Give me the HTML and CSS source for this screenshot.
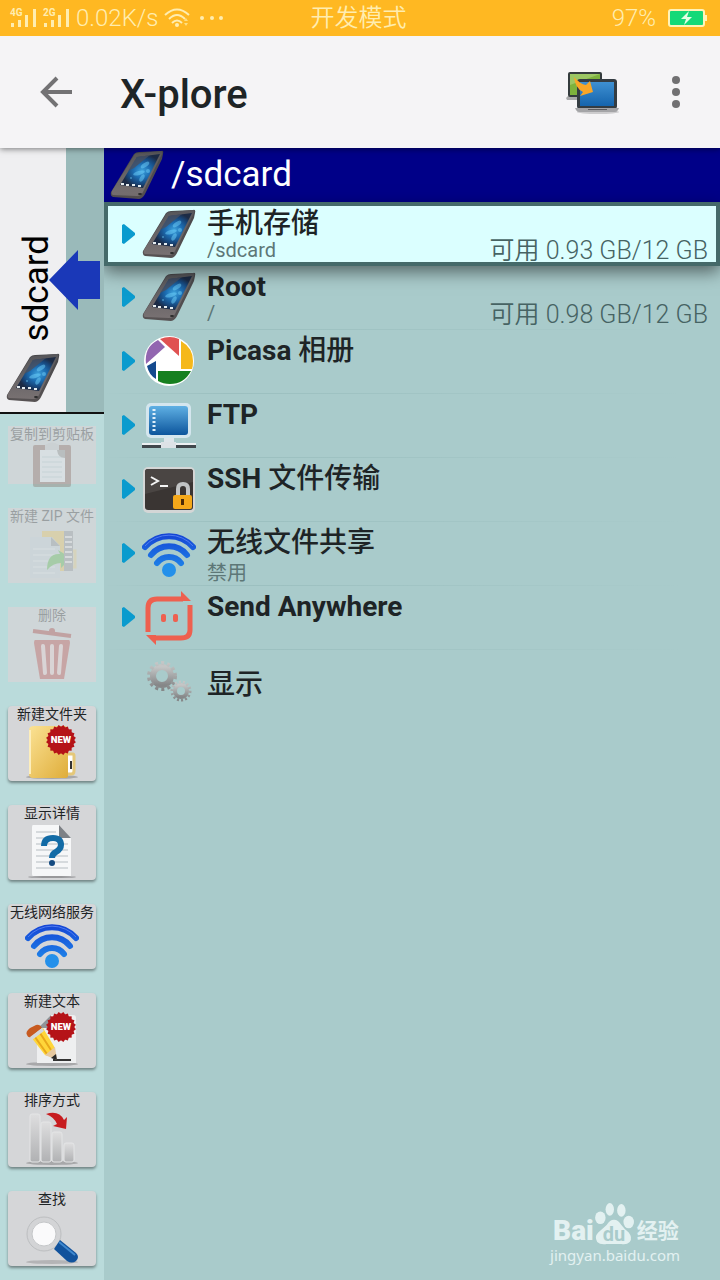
FILE: index.html
```html
<!DOCTYPE html>
<html lang="zh-CN">
<head>
    <meta charset="UTF-8">
    <meta name="viewport" content="width=device-width, initial-scale=1.0">
    <title>X-plore</title>
    <link rel="stylesheet" href="styles.css">
</head>
<body>
    <!-- Shared icons -->
    <svg class="defs" width="0" height="0" aria-hidden="true">
        <defs>
            <linearGradient id="phone-body" x1="0" y1="0" x2="0" y2="1">
                <stop offset="0" stop-color="#48484b"/>
                <stop offset="1" stop-color="#575253"/>
            </linearGradient>
            <linearGradient id="phone-front" x1="0" y1="0" x2="0" y2="1">
                <stop offset="0" stop-color="#56565a"/>
                <stop offset="1" stop-color="#787172"/>
            </linearGradient>
            <radialGradient id="phone-glow" cx="0.55" cy="0.5" r="0.5">
                <stop offset="0" stop-color="#3fa3dc"/>
                <stop offset="0.4" stop-color="#1d6fb4"/>
                <stop offset="0.75" stop-color="#17477c"/>
                <stop offset="1" stop-color="#1c2b45"/>
            </radialGradient>
            <linearGradient id="wifi-blue" gradientUnits="userSpaceOnUse" x1="0" y1="0" x2="0" y2="46">
                <stop offset="0" stop-color="#1440d4"/>
                <stop offset="1" stop-color="#2196ee"/>
            </linearGradient>
            <linearGradient id="gold" x1="0" y1="0" x2="1" y2="1">
                <stop offset="0" stop-color="#fbe294"/>
                <stop offset="1" stop-color="#dfad3a"/>
            </linearGradient>
            <linearGradient id="screen" x1="0" y1="0" x2="0" y2="1">
                <stop offset="0" stop-color="#5fb0e4"/>
                <stop offset="1" stop-color="#0c559c"/>
            </linearGradient>
            <linearGradient id="laptop" x1="0" y1="0" x2="0" y2="1">
                <stop offset="0" stop-color="#3e90d2"/>
                <stop offset="1" stop-color="#1564ad"/>
            </linearGradient>
            <linearGradient id="grey" x1="0" y1="0" x2="0" y2="1">
                <stop offset="0" stop-color="#c4c6c6"/>
                <stop offset="1" stop-color="#858788"/>
            </linearGradient>
            <linearGradient id="bar" x1="0" y1="0" x2="0" y2="1">
                <stop offset="0" stop-color="#dededf"/>
                <stop offset="1" stop-color="#b0b1b3"/>
            </linearGradient>
        </defs>
        <symbol id="icon-phone" viewBox="0 0 54 50">
            <path d="M24 4 Q26 2 29 2 L51 1 Q54 0 53 4 L52 9 L36 42 Q33 49 29 49 L3 47 Q0 46 1 42Z" fill="url(#phone-body)"/>
            <path d="M25 4 Q26 3 30 3 L51 1 Q53 1 52 4 L33 42 Q31 46 27 46 L3 45 Q1 44 2 41Z" fill="url(#phone-front)"/>
            <path d="M27 7 L50 4 L33 38 L10 35Z" fill="url(#phone-glow)"/>
            <path d="M27 7 L40 5 L24 18 L18 21Z" fill="#4a5060" opacity=".8"/>
            <g fill="#6fd0fa" opacity=".5">
                <ellipse cx="35" cy="15" rx="5" ry="2" transform="rotate(-35 35 15)"/>
                <ellipse cx="29" cy="23" rx="6" ry="2" transform="rotate(-15 29 23)"/>
                <ellipse cx="32" cy="28" rx="2" ry="4" transform="rotate(30 32 28)"/>
                <circle cx="38" cy="21" r="2"/>
                <circle cx="21" cy="28" r="1"/>
            </g>
            <path d="M11 34h3M16 35h3M22 35h3M28 36h3" stroke="#e4ecf0" stroke-width="2"/>
            <ellipse cx="30" cy="44" rx="2" ry="1" fill="#2a2a2a"/>
        </symbol>
        <symbol id="icon-wifi" viewBox="0 0 54 46">
            <g fill="none" stroke="url(#wifi-blue)" stroke-linecap="round" stroke-width="6">
                <path d="M3 15A32 32 0 0 1 51 15"/>
                <path d="M9 23A23 23 0 0 1 45 23"/>
                <path d="M15 31A15 15 0 0 1 39 31"/>
            </g>
            <path d="M3 14A32 32 0 0 1 51 14" fill="none" stroke="#4f7cf0"/>
            <circle cx="27" cy="38" r="7" fill="#2490ea"/>
        </symbol>
        <symbol id="icon-new" viewBox="0 0 30 30">
            <g fill="#b51318">
                <rect x="5" y="5" width="20" height="20"/>
                <rect x="5" y="5" width="20" height="20" transform="rotate(18 15 15)"/>
                <rect x="5" y="5" width="20" height="20" transform="rotate(36 15 15)"/>
                <rect x="5" y="5" width="20" height="20" transform="rotate(54 15 15)"/>
                <rect x="5" y="5" width="20" height="20" transform="rotate(72 15 15)"/>
            </g>
            <text x="15" y="18" class="new-text" text-anchor="middle">NEW</text>
        </symbol>
    </svg>

    <div class="app">
        <!-- Status bar -->
        <div class="status-bar">
            <div class="status-left">
                <svg width="62" height="24" viewBox="0 0 62 24" aria-hidden="true">
                    <g fill="#ffedb0">
                        <text x="1" y="10" class="net">4G</text>
                        <text x="34" y="10" class="net">2G</text>
                        <path d="M2 17h3v4h-3z M9 14h3v7h-3z M16 9h3v12h-3z M24 3h3v18h-3z"/>
                        <path d="M35 17h3v4h-3z M42 14h3v7h-3z M49 9h3v12h-3z M57 3h3v18h-3z"/>
                    </g>
                </svg>
                <span>0.02K/s</span>
                <svg width="26" height="20" viewBox="0 0 26 20" aria-hidden="true">
                    <g fill="none" stroke="#ffedb0" stroke-width="2">
                        <path d="M1 7 Q13 -4 25 7"/>
                        <path d="M5 11 Q13 3 21 11"/>
                        <path d="M8 15 Q13 10 18 15"/>
                    </g>
                    <circle cx="13" cy="17" r="2" fill="#ffedb0"/>
                    <path d="M20 13l2 -3 2 3z M20 15l2 3 2 -3z" fill="#ffdf80"/>
                </svg>
                <svg class="dots" width="24" height="4" viewBox="0 0 24 4" fill="#ffedb0" aria-hidden="true">
                    <circle cx="2" cy="2" r="2"/><circle cx="12" cy="2" r="2"/><circle cx="21" cy="2" r="2"/>
                </svg>
            </div>
            <div>开发模式</div>
            <div class="status-right">
                <span>97%</span>
                <svg width="40" height="18" viewBox="0 0 40 18" aria-hidden="true">
                    <rect x="1" y="1" width="35" height="16" rx="2" fill="#14d978" stroke="#fff3b8" stroke-width="2"/>
                    <path d="M37 6h2v6h-2z" fill="#fff3b8"/>
                    <path d="M21 2l-8 8h5l-2 6 8 -8h-5z" fill="#e4ffe4"/>
                </svg>
            </div>
        </div>

        <!-- Toolbar -->
        <header class="toolbar">
            <button class="icon-btn" aria-label="返回">
                <svg width="32" height="32" viewBox="0 0 32 32" fill="none" stroke="#737274" stroke-width="4">
                    <path d="M32 16H3M17 2L3 16l14 14"/>
                </svg>
            </button>
            <h1>X-plore</h1>
            <button class="icon-btn" aria-label="切换窗格">
                <svg width="54" height="46" viewBox="0 0 54 46">
                    <path d="M1 31h14v-4H2l-2 2z" fill="#a9a9ab"/>
                    <rect x="2" y="3" width="34" height="25" rx="2" fill="#343b3d"/>
                    <path d="M4 5h30v6H13v15H4z" fill="#7db23c"/>
                    <path d="M4 5h30L4 16z" fill="#9cc763"/>
                    <ellipse cx="32" cy="43" rx="21" ry="2" fill="#cdccce"/>
                    <rect x="11" y="10" width="40" height="30" rx="3" fill="#343c42"/>
                    <rect x="14" y="13" width="34" height="24" fill="url(#laptop)"/>
                    <path d="M9 39h44l-1 2q-1 2 -3 2H13q-2 0 -3 -2z" fill="#a4a4a7"/>
                    <path d="M22 40h19v1H22z" fill="#5c5c5f"/>
                    <path d="M8 8q6 7 12 8l4 -4 3 11 -13 4 3 -4q-8 -4 -9 -15z" fill="#f9a626"/>
                </svg>
            </button>
            <button class="icon-btn menu" aria-label="更多">
                <svg width="8" height="32" viewBox="0 0 8 32" fill="#717072">
                    <circle cx="4" cy="4" r="4"/><circle cx="4" cy="16" r="4"/><circle cx="4" cy="28" r="4"/>
                </svg>
            </button>
        </header>

        <div class="content">
            <aside class="sidebar">
                <div class="pane-tab">
                    <button class="pane-switch">
                        <span>sdcard</span>
                        <svg width="54" height="50"><use href="#icon-phone"/></svg>
                    </button>
                    <svg class="pane-arrow" width="52" height="60" viewBox="0 0 52 60" aria-hidden="true">
                        <path d="M0 30L29 0v11h22v38H29v11z" fill="#1a38b8"/>
                    </svg>
                </div>

                <div class="tools">
                    <button class="tool short" disabled>
                        <span>复制到剪贴板</span>
                        <svg width="54" height="46" viewBox="0 0 54 46">
                            <rect x="8" y="3" width="38" height="42" rx="2" fill="#7b5548"/>
                            <path d="M15 8h25v32H15z" fill="#eef6fa"/>
                            <path d="M17 15h20M17 20h20M17 25h20M17 30h20M17 35h20" stroke="#b4cad6"/>
                            <path d="M20 3q7 -5 14 0v5H20z" fill="#c2c6c9"/>
                            <path d="M32 8h8v8q-7 0 -8 -8z" fill="#888"/>
                        </svg>
                    </button>
                    <button class="tool" disabled>
                        <span>新建 ZIP 文件</span>
                        <svg width="54" height="54" viewBox="0 0 54 54">
                            <path d="M17 4h30v40H17z" fill="#eec54e"/>
                            <path d="M43 24h7v16h-7" fill="none" stroke="#e8cf80" stroke-width="3"/>
                            <path d="M5 10h22l8 9v32H5z" fill="#c6d5dc"/>
                            <path d="M8 22h22M8 28h22M8 34h22M8 40h22M8 46h22" stroke="#eef5f8"/>
                            <path d="M26 10l9 9h-9z" fill="#858b92"/>
                            <path d="M22 43q0 -17 13 -16l-2 -4 13 8 -10 10 0 -5q-8 0 -14 7z" fill="#4bb83b"/>
                            <path d="M39 4h9v40h-9z" fill="#888d92"/>
                            <path d="M40 10h7M40 15h7M40 20h7M40 25h7M40 30h7M40 35h7" stroke="#e6e6e6" stroke-width="2"/>
                        </svg>
                    </button>
                    <button class="tool" disabled>
                        <span>删除</span>
                        <svg width="54" height="54" viewBox="0 0 54 54">
                            <path d="M8 5l38 5" stroke="#a22c28" stroke-width="4"/>
                            <circle cx="27" cy="5" r="3" fill="#a22c28"/>
                            <path d="M10 14h34q1 0 1 3l-6 36H15L9 17q0 -3 1 -3z" fill="#b83632"/>
                            <path d="M18 20l2 27M27 20v27M36 20l-2 27" stroke="#f2d2d0" stroke-width="4" stroke-linecap="round"/>
                        </svg>
                    </button>
                    <button class="tool">
                        <span>新建文件夹</span>
                        <svg width="54" height="54" viewBox="0 0 54 54">
                            <ellipse cx="27" cy="52" rx="26" ry="2" fill="#a8a8aa"/>
                            <path d="M41 29h7q1 0 1 2v15q0 3 -3 3h-5" fill="#fff" stroke="#e5c879" stroke-width="3"/>
                            <path d="M46 36v8" stroke="#333" stroke-width="2"/>
                            <path d="M9 1h30q4 0 4 4v46q0 2 -4 2H8q-4 0 -4 -4V5q0 -4 5 -4z" fill="url(#gold)"/>
                            <path d="M5 5v44" stroke="#fdeebc" stroke-width="2"/>
                            <use href="#icon-new" x="20" y="-1" width="32" height="32"/>
                        </svg>
                    </button>
                    <button class="tool">
                        <span>显示详情</span>
                        <svg width="54" height="54" viewBox="0 0 54 54">
                            <ellipse cx="27" cy="53" rx="24" ry="1" fill="#98989a"/>
                            <path d="M8 1h26l12 13v38H8q-1 0 -1 -2V3q0 -2 1 -2z" fill="#f6f7f8"/>
                            <path d="M11 8h20M11 14h22M11 20h32M11 26h32M11 32h32M11 38h32M11 44h32" stroke="#d6dadd" stroke-width="2"/>
                            <path d="M34 1l12 13H34z" fill="#7d8186"/>
                            <path d="M19 22q0 -8 9 -8 8 0 8 7 0 4 -5 7 -4 2 -4 6" fill="none" stroke="#126ba6" stroke-width="6"/>
                            <circle cx="27" cy="39" r="3" fill="#144a80"/>
                        </svg>
                    </button>
                    <button class="tool wifi">
                        <span>无线网络服务</span>
                        <svg width="54" height="46"><use href="#icon-wifi"/></svg>
                    </button>
                    <button class="tool">
                        <span>新建文本</span>
                        <svg width="54" height="54" viewBox="0 0 54 54">
                            <ellipse cx="27" cy="52" rx="26" ry="2" fill="#a8a8aa"/>
                            <path d="M26 3h22q3 0 3 3v45H12V16z" fill="#eeeff0"/>
                            <path d="M13 16L26 3v13z" fill="#909498"/>
                            <path d="M28 48h18" stroke="#333" stroke-width="2"/>
                            <path d="M6 25l12 -9 12 20 0 10 -10 -3z" fill="#ffd63a"/>
                            <path d="M10 25l12 17M15 21l11 17" stroke="#e8a81b" stroke-width="2"/>
                            <path d="M2 23q-2 -3 3 -7l6 -3q4 -1 6 3l-11 9q-3 1 -4 -2z" fill="#c75a20"/>
                            <path d="M5 25l12 -9 2 3 -12 9z" fill="#d4d7da"/>
                            <path d="M20 43l10 -8 2 13z" fill="#e7c9a0"/>
                            <path d="M26 46l5 -4 1 6z" fill="#282828"/>
                            <use href="#icon-new" x="20" y="-1" width="32" height="32"/>
                        </svg>
                    </button>
                    <button class="tool">
                        <span>排序方式</span>
                        <svg width="54" height="54" viewBox="0 0 54 54">
                            <ellipse cx="27" cy="52" rx="26" ry="2" fill="#a8a8aa"/>
                            <g fill="url(#bar)" stroke="#e4e5e6">
                                <rect x="5" y="3" width="10" height="48" rx="2"/>
                                <rect x="16" y="11" width="10" height="40" rx="2"/>
                                <rect x="27" y="21" width="10" height="30" rx="2"/>
                                <rect x="39" y="32" width="10" height="19" rx="2"/>
                            </g>
                            <path d="M21 3q13 -4 18 6l3 -3 -1 12 -13 -3 4 -2q-3 -7 -11 -10z" fill="#c71c1f"/>
                        </svg>
                    </button>
                    <button class="tool">
                        <span>查找</span>
                        <svg width="54" height="54" viewBox="0 0 54 54">
                            <ellipse cx="27" cy="52" rx="26" ry="2" fill="#b4b4b6"/>
                            <circle cx="19" cy="24" r="17" fill="#d3d4d6" stroke="#bcbec0"/>
                            <circle cx="19" cy="24" r="12" fill="#fafafb" stroke="#c5c7c9"/>
                            <path d="M35 30l16 13q4 4 0 8 -4 3 -9 0L29 39z" fill="#11529c"/>
                            <path d="M34 32l16 13" stroke="#3f88ce" stroke-width="2"/>
                        </svg>
                    </button>
                </div>
            </aside>

            <main class="pane">
                <div class="path-bar">
                    <svg width="54" height="50"><use href="#icon-phone"/></svg>
                    <span>/sdcard</span>
                </div>
                <ul class="file-list">
                    <li>
                        <button class="row selected">
                            <i class="expand"></i>
                            <svg width="54" height="50"><use href="#icon-phone"/></svg>
                            <span class="info"><b class="cjk">手机存储</b><small>/sdcard</small></span>
                            <span class="space">可用 0.93 GB/12 GB</span>
                        </button>
                    </li>
                    <li>
                        <button class="row">
                            <i class="expand"></i>
                            <svg width="54" height="50"><use href="#icon-phone"/></svg>
                            <span class="info"><b>Root</b><small>/</small></span>
                            <span class="space">可用 0.98 GB/12 GB</span>
                        </button>
                    </li>
                    <li>
                        <button class="row">
                            <i class="expand"></i>
                            <svg width="54" height="50" viewBox="0 0 54 50">
                                <circle cx="27" cy="25" r="25" fill="#fff"/>
                                <path d="M18 3q10 -4 19 0v17z" fill="#e05252"/>
                                <path d="M39 5q12 7 12 20 0 5 -1 8H39z" fill="#f5b81b"/>
                                <path d="M49 35q-7 13 -21 13 -7 0 -12 -3V35z" fill="#168020"/>
                                <path d="M14 43q-7 -4 -9 -13l9 -5z" fill="#154a8e"/>
                                <path d="M4 28Q2 11 16 4l7 7Z" fill="#9266b0"/>
                            </svg>
                            <span class="info"><b>Picasa <span class="cjk">相册</span></b></span>
                        </button>
                    </li>
                    <li>
                        <button class="row">
                            <i class="expand"></i>
                            <svg width="54" height="50" viewBox="0 0 54 50">
                                <path d="M22 37h10v7H22z" fill="#dde5ea"/>
                                <rect x="4" y="3" width="45" height="35" rx="5" fill="#d4e6ee"/>
                                <rect x="7" y="6" width="39" height="29" rx="3" fill="url(#screen)"/>
                                <path d="M12 9v22" stroke="#dfeffa" stroke-width="3" stroke-dasharray="2 2"/>
                                <path d="M0 43h54v5H0z" fill="#40474c"/>
                                <path d="M0 43h54v2H0z" fill="#ecf0f2"/>
                                <path d="M19 42h15v6H19z" fill="#dde2e6"/>
                            </svg>
                            <span class="info"><b>FTP</b></span>
                        </button>
                    </li>
                    <li>
                        <button class="row">
                            <i class="expand"></i>
                            <svg width="54" height="50" viewBox="0 0 54 50">
                                <rect x="1" y="3" width="52" height="46" rx="5" fill="#d4d6d6"/>
                                <rect x="3" y="5" width="48" height="41" rx="3" fill="#3a3533"/>
                                <path d="M3 8q0 -3 3 -3h42q3 0 3 3v10L3 30z" fill="#4a4543"/>
                                <path d="M9 13l7 4 -7 4M18 22h8" fill="none" stroke="#f4f4f4" stroke-width="2"/>
                                <path d="M36 32v-7q0 -5 5 -5t5 5v7" fill="none" stroke="#c2c4c5" stroke-width="4"/>
                                <rect x="31" y="31" width="19" height="14" rx="2" fill="#f5a81a"/>
                                <path d="M39 35h3v6h-3z" fill="#4b2a06"/>
                            </svg>
                            <span class="info"><b>SSH <span class="cjk">文件传输</span></b></span>
                        </button>
                    </li>
                    <li>
                        <button class="row">
                            <i class="expand"></i>
                            <svg width="54" height="54" viewBox="0 0 54 46"><use href="#icon-wifi"/></svg>
                            <span class="info"><b class="cjk">无线文件共享</b><small>禁用</small></span>
                        </button>
                    </li>
                    <li>
                        <button class="row">
                            <i class="expand"></i>
                            <svg width="54" height="54" viewBox="0 0 54 54">
                                <g fill="none" stroke="#ee604f" stroke-width="5">
                                    <path d="M6 40V16q0 -9 9 -9h26"/>
                                    <path d="M48 13v25q0 8 -9 8H13"/>
                                </g>
                                <path d="M39 -1l10 10H39z M14 53L4 43h10z" fill="#ee604f"/>
                                <rect x="19" y="22" width="5" height="8" rx="2" fill="#ee604f"/>
                                <rect x="31" y="22" width="5" height="8" rx="2" fill="#ee604f"/>
                            </svg>
                            <span class="info"><b>Send Anywhere</b></span>
                        </button>
                    </li>
                    <li>
                        <button class="row single">
                            <i class="no-expand"></i>
                            <svg width="54" height="50" viewBox="0 0 54 50" fill="none" stroke="url(#grey)">
                                <circle cx="20" cy="20" r="9" stroke-width="6"/>
                                <circle cx="20" cy="20" r="13" stroke-width="4" stroke-dasharray="3 3"/>
                                <circle cx="39" cy="35" r="6" stroke-width="4"/>
                                <circle cx="39" cy="35" r="9" stroke-width="3" stroke-dasharray="2 2"/>
                            </svg>
                            <span class="info"><b class="cjk">显示</b></span>
                        </button>
                    </li>
                </ul>
            </main>
        </div>

        <div class="watermark">
            <div class="watermark-logo">
                <span class="bai">Bai</span>
                <svg width="40" height="42" viewBox="0 0 38 40">
                    <g fill="#e3f1f1">
                        <ellipse cx="6" cy="15" rx="5" ry="6"/>
                        <ellipse cx="15" cy="7" rx="4" ry="6"/>
                        <ellipse cx="26" cy="8" rx="4" ry="6"/>
                        <ellipse cx="33" cy="19" rx="5" ry="6"/>
                        <path d="M19 17q4 0 7 5 3 4 7 7 4 5 1 9 -3 3 -8 2H12q-6 1 -9 -2 -3 -5 1 -9l8 -7q3 -5 7 -5z"/>
                    </g>
                    <text x="19" y="37" class="du" text-anchor="middle">du</text>
                </svg>
                <span class="jingyan">经验</span>
            </div>
            <div class="watermark-url">jingyan.baidu.com</div>
        </div>
    </div>
</body>
</html>
```
FILE: styles.css
```css
* {
    box-sizing: border-box;
}
body {
    margin: 0;
    font-family: Roboto, "Noto Sans CJK SC", sans-serif;
    color: #1e2426;
    background: #a9cbcb;
}
button {
    font-family: inherit;
    color: inherit;
    border: none;
    padding: 0;
    background: none;
    cursor: pointer;
}
svg {
    display: block;
    flex-shrink: 0;
    overflow: visible;
}
.defs { position: absolute; }
.app {
    position: relative;
    display: flex;
    flex-direction: column;
    min-height: 100vh;
}

/* Status bar */
.status-bar {
    position: relative;
    z-index: 3;
    display: grid;
    grid-template-columns: 1fr auto 1fr;
    align-items: center;
    height: 36px;
    padding: 0 12px 0 9px;
    background: #ffb822;
    color: #ffedb0;
    font-size: 24px;
    font-weight: 350;
    line-height: 36px;
}
.status-left, .status-right {
    display: flex;
    align-items: center;
    gap: 5px;
}
.status-right {
    justify-content: flex-end;
    gap: 12px;
}
.dots { margin-left: 5px; }
.net {
    font-size: 10px;
    font-weight: 700;
}

/* Toolbar */
.toolbar {
    position: relative;
    z-index: 2;
    display: flex;
    align-items: center;
    height: 112px;
    padding: 0 40px;
    background: #f5f4f6;
    box-shadow: 0 1px 6px rgba(0,0,0,0.5);
}
.toolbar h1 {
    flex: 1;
    margin: 0 0 0 48px;
    padding-top: 6px;
    font-size: 40px;
    font-weight: 500;
    line-height: 48px;
}
.menu { margin-left: 52px; }

.content {
    display: flex;
    flex: 1;
}

/* Sidebar */
.sidebar {
    display: flex;
    flex-direction: column;
    width: 104px;
    background: #badbdb;
}
.pane-tab {
    position: relative;
    height: 266px;
    background: #9ababa;
    border-bottom: 2px solid #111;
}
.pane-switch {
    display: flex;
    flex-direction: column;
    align-items: center;
    justify-content: flex-end;
    gap: 12px;
    width: 66px;
    height: 100%;
    padding-bottom: 9px;
    background: #efeff1;
}
.pane-switch span {
    writing-mode: vertical-rl;
    transform: rotate(180deg);
    font-size: 35px;
    line-height: 44px;
    margin-left: 8px;
    color: #000;
}
.pane-arrow {
    position: absolute;
    left: 49px;
    top: 102px;
}
.tools {
    display: flex;
    flex-direction: column;
    gap: 24px;
    padding: 12px 8px;
}
.tool {
    display: flex;
    flex-direction: column;
    align-items: center;
    gap: 3px;
    height: 75px;
    border-radius: 4px;
    background: #d5d6d8;
    box-shadow: 0 2px 3px rgba(0,0,0,0.4);
    font-size: 14px;
    line-height: 16px;
    white-space: nowrap;
}
.tool.short {
    height: 58px;
    gap: 0;
}
.tool.wifi { height: 65px; }
.tool:disabled {
    border-radius: 0;
    box-shadow: none;
    color: #1e2426;
    background: #cfd6d8;
}
.tool:disabled > * { opacity: 0.3; }
.new-text {
    fill: #fff;
    font-size: 9px;
    font-weight: 900;
}

/* File list */
.pane {
    flex: 1;
    min-width: 0;
    overflow: hidden;
    background: #a9cbcb;
}
.path-bar {
    display: flex;
    align-items: center;
    gap: 7px;
    height: 54px;
    padding: 0 6px;
    background: #000088;
    color: #fff;
    font-size: 35px;
    line-height: 50px;
}
.file-list {
    list-style: none;
    margin: 0;
    padding: 0;
}
.row {
    position: relative;
    display: flex;
    width: 100%;
    height: 64px;
    padding: 6px 12px 0 18px;
    text-align: left;
    border-bottom: 1px solid transparent;
    border-image: linear-gradient(to right, #a9cbcb, #9bbfbf 20%, #a9cbcb 95%) 1;
}
.row.selected {
    z-index: 1;
    padding: 3px 8px 0 14px;
    background: #dbffff;
    border: 4px solid #456a6a;
    border-image: none;
    box-shadow: 0 6px 16px rgba(0,0,0,0.5);
}
.row.single { border-image: none; }
.expand {
    width: 13px;
    height: 20px;
    margin: 15px 7px 0 0;
    background: #0a9bce;
    clip-path: polygon(0 5%, 15% 0, 100% 45%, 100% 55%, 15% 100%, 0 95%);
}
.no-expand { width: 20px; }
.info {
    display: flex;
    flex: 1;
    flex-direction: column;
    margin-left: 11px;
}
.info b {
    font-size: 28px;
    font-weight: 700;
    line-height: 30px;
}
.info .cjk { font-weight: 500; }
.info small {
    margin-top: -1px;
    font-size: 20px;
    line-height: normal;
    color: #5d7777;
}
.space {
    align-self: flex-end;
    font-size: 25px;
    font-weight: 350;
    line-height: 28px;
    color: #466363;
}
.selected .space { line-height: 22px; }
.row.single .info { justify-content: center; }

/* Watermark */
.watermark {
    position: absolute;
    right: 40px;
    bottom: 14px;
    color: #e3f1f1;
}
.watermark-logo {
    display: flex;
    align-items: flex-end;
    line-height: 26px;
}
.bai {
    margin-left: 3px;
    font-size: 28px;
    font-weight: 900;
}
.du {
    fill: #a9cbcb;
    font-size: 19px;
    font-weight: 700;
}
.jingyan {
    margin-left: 3px;
    font-size: 21px;
    font-weight: 700;
}
.watermark-url {
    font-family: "Noto Sans", sans-serif;
    font-size: 15px;
    line-height: 22px;
}
```
